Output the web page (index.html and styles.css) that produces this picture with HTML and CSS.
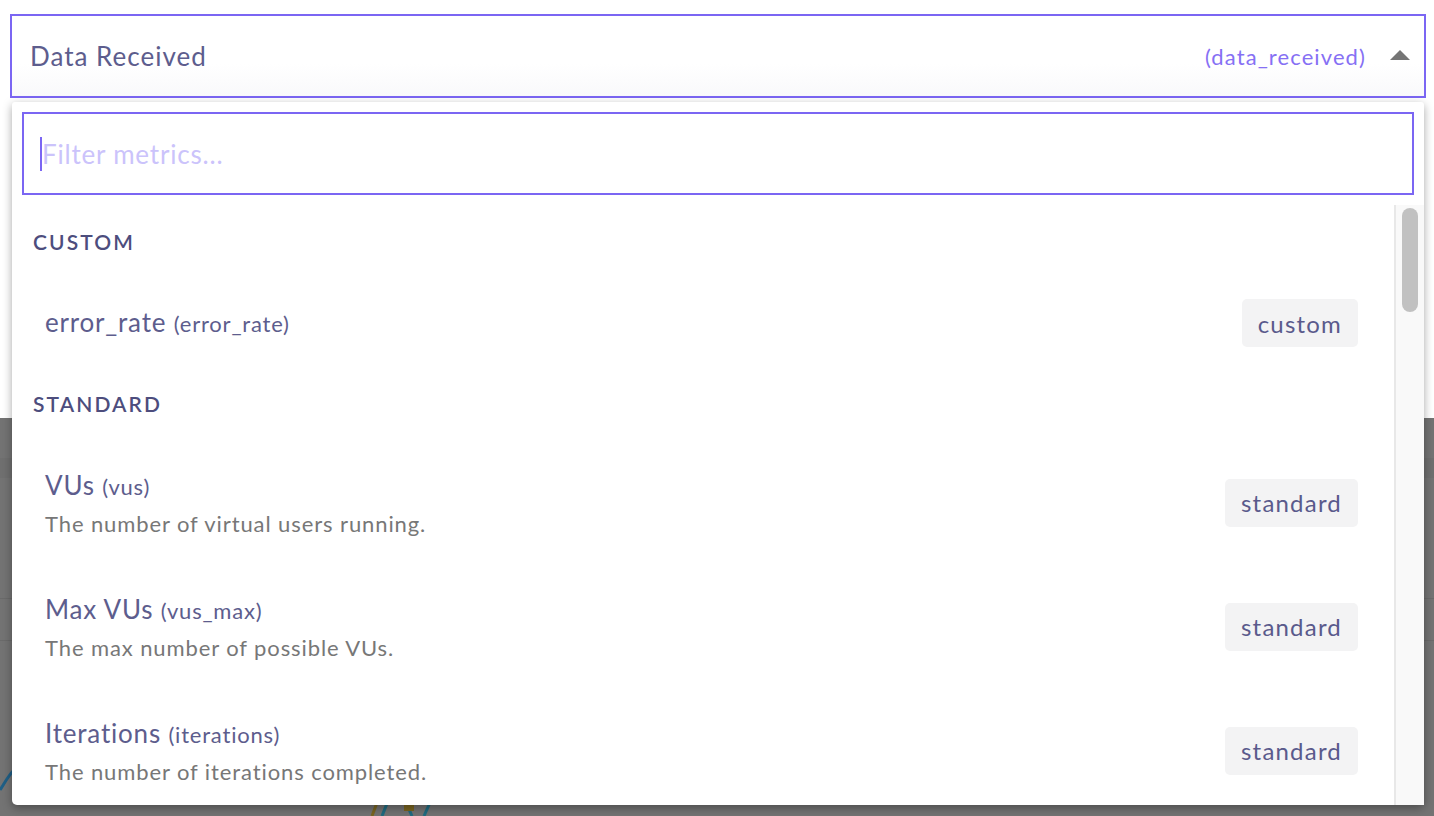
FILE: index.html
```html
<!DOCTYPE html>
<html lang="en">
<head>
<meta charset="utf-8">
<title>Metric picker</title>
<link rel="stylesheet" href="styles.css">
</head>
<body>
<div class="page">
  <div class="page-top"></div>
  <div class="backdrop">
    <div class="bd-line l1"></div>
    <div class="bd-line l2"></div>
    <div class="bd-line l3"></div>
    <svg class="chart" width="1434" height="398" viewBox="0 0 1434 398">
      <path d="M0 372 C4 366 8 358 14 352" fill="none" stroke="#1f5f86" stroke-width="3"/>
      <path d="M372 398 L378 382" fill="none" stroke="#7a6520" stroke-width="3"/>
      <path d="M382 398 L390 378" fill="none" stroke="#1f6b80" stroke-width="3"/>
      <path d="M404 380 L412 398" fill="none" stroke="#1f6b80" stroke-width="3"/>
      <rect x="404" y="385" width="10" height="8" fill="#7a6520"/>
      <path d="M424 398 L432 380" fill="none" stroke="#1f6b80" stroke-width="3"/>
    </svg>
  </div>

  <div class="select">
    <span class="select-label">Data Received</span>
    <span class="select-key">(data_received)</span>
    <span class="caret"></span>
  </div>

  <div class="menu">
    <div class="filter">
      <span class="cursor"></span>
      <span class="placeholder">Filter metrics...</span>
    </div>
    <div class="list-wrap">
      <div class="list">
        <div class="group-title first">CUSTOM</div>
        <div class="item item-single">
          <div class="item-text">
            <div class="item-name">error_rate <span class="item-key">(error_rate)</span></div>
          </div>
          <span class="badge">custom</span>
        </div>
        <div class="group-title">STANDARD</div>
        <div class="item">
          <div class="item-text">
            <div class="item-name">VUs <span class="item-key">(vus)</span></div>
            <div class="item-desc">The number of virtual users running.</div>
          </div>
          <span class="badge">standard</span>
        </div>
        <div class="item">
          <div class="item-text">
            <div class="item-name">Max VUs <span class="item-key">(vus_max)</span></div>
            <div class="item-desc">The max number of possible VUs.</div>
          </div>
          <span class="badge">standard</span>
        </div>
        <div class="item">
          <div class="item-text">
            <div class="item-name">Iterations <span class="item-key">(iterations)</span></div>
            <div class="item-desc">The number of iterations completed.</div>
          </div>
          <span class="badge">standard</span>
        </div>
      </div>
      <div class="scrollbar"><div class="thumb"></div></div>
    </div>
  </div>
</div>
</body>
</html>
```

FILE: styles.css
```css
* { box-sizing: border-box; }
html, body {
  margin: 0;
  padding: 0;
}
body {
  width: 1434px;
  height: 816px;
  overflow: hidden;
  font-family: Lato, "Open Sans", sans-serif;
  background: #ffffff;
}
.page {
  position: relative;
  width: 1434px;
  height: 816px;
  display: flex;
  flex-direction: column;
}
.page-top {
  height: 418px;
  background: #ffffff;
}
.backdrop {
  position: relative;
  flex: 1;
  background: #737373;
  overflow: hidden;
}
.bd-line {
  position: absolute;
  left: 0;
  right: 0;
  height: 1px;
  background: #6a6a6a;
}
.bd-line.l1 { top: 40px; height: 20px; background: #6f6f6f; }
.bd-line.l2 { top: 180px; }
.bd-line.l3 { top: 222px; }
.chart {
  position: absolute;
  left: 0;
  top: 0;
}

/* select */
.select {
  position: absolute;
  left: 10px;
  top: 14px;
  width: 1416px;
  height: 84px;
  border: 2px solid #7b66f3;
  background: linear-gradient(#ffffff 60%, #f9f9fb);
  display: flex;
  align-items: center;
  padding: 0 14px 0 18px;
}
.select-label {
  flex: 1;
  font-size: 26px;
  color: #5d5d8d;
  letter-spacing: 1px;
}
.select-key {
  font-size: 22px;
  letter-spacing: 1.1px;
  color: #8670f4;
  margin-right: 24px;
}
.caret {
  width: 0;
  height: 0;
  border-left: 10px solid transparent;
  border-right: 10px solid transparent;
  border-bottom: 10px solid #757575;
  margin-bottom: 2px;
}

/* menu */
.menu {
  position: absolute;
  left: 12px;
  top: 102px;
  width: 1412px;
  height: 703px;
  background: #ffffff;
  border-radius: 3px 3px 5px 5px;
  box-shadow: 0 3px 10px rgba(0, 0, 0, 0.35);
  display: flex;
  flex-direction: column;
  padding: 10px 10px 0 10px;
}
.filter {
  height: 83px;
  border: 2px solid #7b66f3;
  display: flex;
  align-items: center;
  padding-left: 16px;
  flex-shrink: 0;
}
.cursor {
  width: 2px;
  height: 34px;
  background: #7b66f3;
}
.placeholder {
  font-size: 26px;
  letter-spacing: 0.8px;
  color: #cbc3fb;
}
.list-wrap {
  flex: 1;
  display: flex;
  margin: 10px -10px 0 -10px;
  min-height: 0;
}
.list {
  flex: 1;
  padding: 25px 36px 0 21px;
  overflow: hidden;
}
.scrollbar {
  width: 30px;
  background: #f9f9f9;
  border-left: 2px solid #e8e8e8;
  padding: 3px 0 0 6px;
}
.thumb {
  width: 16px;
  height: 104px;
  border-radius: 8px;
  background: #c1c1c1;
}
.group-title {
  font-size: 21px;
  line-height: 24px;
  height: 24px;
  font-weight: 600;
  color: #4d4d7d;
  letter-spacing: 2.1px;
  margin-top: 45px;
}
.group-title.first { margin-top: 0; }
.item {
  display: flex;
  align-items: center;
  padding-left: 12px;
  margin-top: 55px;
  height: 66px;
}
.item + .item { margin-top: 58px; }
.item-single {
  margin-top: 45px;
  height: 48px;
}
.item-text {
  flex: 1;
  min-width: 0;
}
.item-name {
  font-size: 26px;
  line-height: 30px;
  letter-spacing: 0.8px;
  color: #5d5d8d;
}
.item-key {
  font-size: 22px;
  letter-spacing: 0.8px;
  color: #5d5d8d;
}
.item-desc {
  margin-top: 8px;
  font-size: 22px;
  line-height: 28px;
  letter-spacing: 0.9px;
  color: #777777;
}
.badge {
  display: inline-flex;
  align-items: center;
  height: 48px;
  padding: 0 16px;
  border-radius: 5px;
  background: #f3f3f4;
  color: #5a5a8c;
  font-size: 24px;
  letter-spacing: 1.2px;
  margin-top: -3px;
}
.item-single .badge { margin-top: 0; }
```
